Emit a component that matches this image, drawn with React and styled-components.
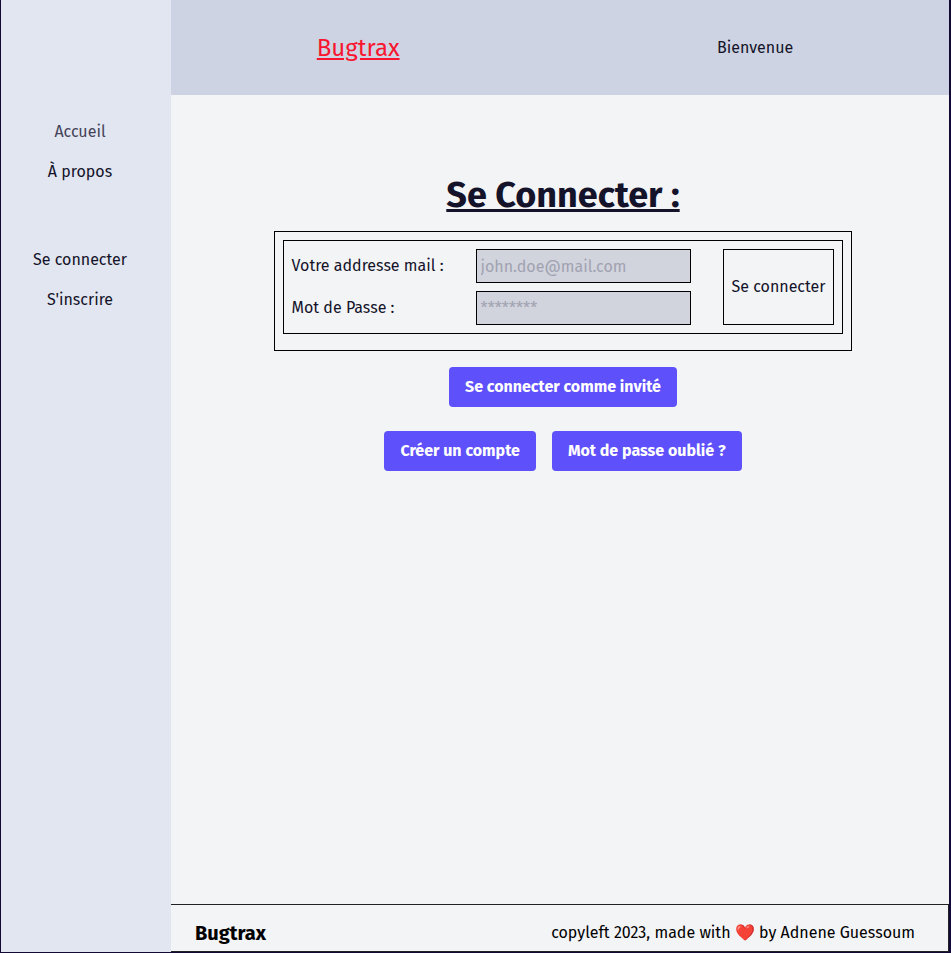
import React from "react";
import styled, { createGlobalStyle } from "styled-components";

const Global = createGlobalStyle`
  * { box-sizing: border-box; }
  body { margin: 0; background: #120a35; }
  body, button, input { font-family: "Fira Sans", "Noto Sans", sans-serif; font-size: 16px; line-height: 24px; color: #14132a; }
`;
const Page = styled.div`
  display: grid;
  grid-template-columns: 170px 1fr;
  min-height: 100vh;
  padding: 0 2px 1px 1px;
`;
const Sidebar = styled.nav`
  display: flex;
  flex-direction: column;
  align-items: center;
  gap: 64px;
  padding: 120px 12px 24px 0;
  background: #e1e6f0;
`;
const NavGroup = styled.div`
  display: flex;
  flex-direction: column;
  align-items: center;
  gap: 16px;
`;
const NavLink = styled.a`
  color: ${(p) => (p.$active ? "#45435a" : "#14132a")};
  text-decoration: none;
  white-space: nowrap;
`;
const Column = styled.div`
  display: flex;
  flex-direction: column;
  background: #f3f4f6;
`;
const Header = styled.header`
  display: flex;
  align-items: center;
  justify-content: space-around;
  gap: 26px;
  height: 95px;
  padding-right: 10px;
  background: #cdd3e2;
`;
const Logo = styled.a`
  color: #f8152f;
  font-size: 24px;
  line-height: 32px;
`;
const Main = styled.main`
  flex: 1;
  display: flex;
  flex-direction: column;
  align-items: center;
  padding: 80px 0 24px 6px;
`;
const Title = styled.h1`
  margin: 0 0 16px;
  font-size: 36px;
  line-height: 40px;
  text-decoration: underline;
`;
const Frame = styled.div`
  padding: 8px 8px 16px;
  border: 1px solid #000;
`;
const Form = styled.form`
  display: grid;
  grid-template-columns: 152px 215px auto;
  column-gap: 32px;
  row-gap: 8px;
  align-items: center;
  padding: 8px;
  border: 1px solid #000;
`;
const Label = styled.label`
  white-space: nowrap;
`;
const Field = styled.input`
  width: 100%;
  height: 34px;
  padding: 4px;
  border: 1px solid #000;
  border-radius: 0;
  background: #d1d4dd;
  &::placeholder { color: #a1a2b1; }
`;
const Submit = styled.button`
  grid-column: 3;
  grid-row: 1 / 3;
  align-self: stretch;
  padding: 0 8px;
  border: 1px solid #000;
  background: transparent;
`;
const Actions = styled.div`
  display: flex;
  gap: 16px;
  margin-top: ${(p) => p.$top}px;
`;
const Action = styled.button`
  padding: 8px 16px;
  border: 0;
  border-radius: 4px;
  background: #5e50fb;
  color: #fff;
  font-weight: 700;
`;
const Footer = styled.footer`
  display: flex;
  align-items: center;
  justify-content: space-between;
  height: 48px;
  padding: 10px 33px 0 24px;
  border: solid #222126;
  border-width: 1px 1px 1px 0;
  color: #000;
`;
const Brand = styled.strong`
  font-size: 20px;
  line-height: 28px;
`;

export default function App() {
  return (
    <Page>
      <Global />
      <Sidebar>
        <NavGroup>
          <NavLink href="#accueil" $active>Accueil</NavLink>
          <NavLink href="#apropos">À propos</NavLink>
        </NavGroup>
        <NavGroup>
          <NavLink href="#connexion">Se connecter</NavLink>
          <NavLink href="#inscription">S'inscrire</NavLink>
        </NavGroup>
      </Sidebar>
      <Column>
        <Header>
          <Logo href="#accueil">Bugtrax</Logo>
          <span>Bienvenue</span>
        </Header>
        <Main>
          <Title>Se Connecter :</Title>
          <Frame>
            <Form>
              <Label htmlFor="mail">Votre addresse mail :</Label>
              <Field id="mail" type="email" placeholder="john.doe@mail.com" />
              <Label htmlFor="password">Mot de Passe :</Label>
              <Field id="password" type="password" placeholder="********" />
              <Submit type="submit">Se connecter</Submit>
            </Form>
          </Frame>
          <Actions $top={16}>
            <Action type="button">Se connecter comme invité</Action>
          </Actions>
          <Actions $top={24}>
            <Action type="button">Créer un compte</Action>
            <Action type="button">Mot de passe oublié ?</Action>
          </Actions>
        </Main>
        <Footer>
          <Brand>Bugtrax</Brand>
          <span>copyleft 2023, made with ❤️ by Adnene Guessoum</span>
        </Footer>
      </Column>
    </Page>
  );
}
